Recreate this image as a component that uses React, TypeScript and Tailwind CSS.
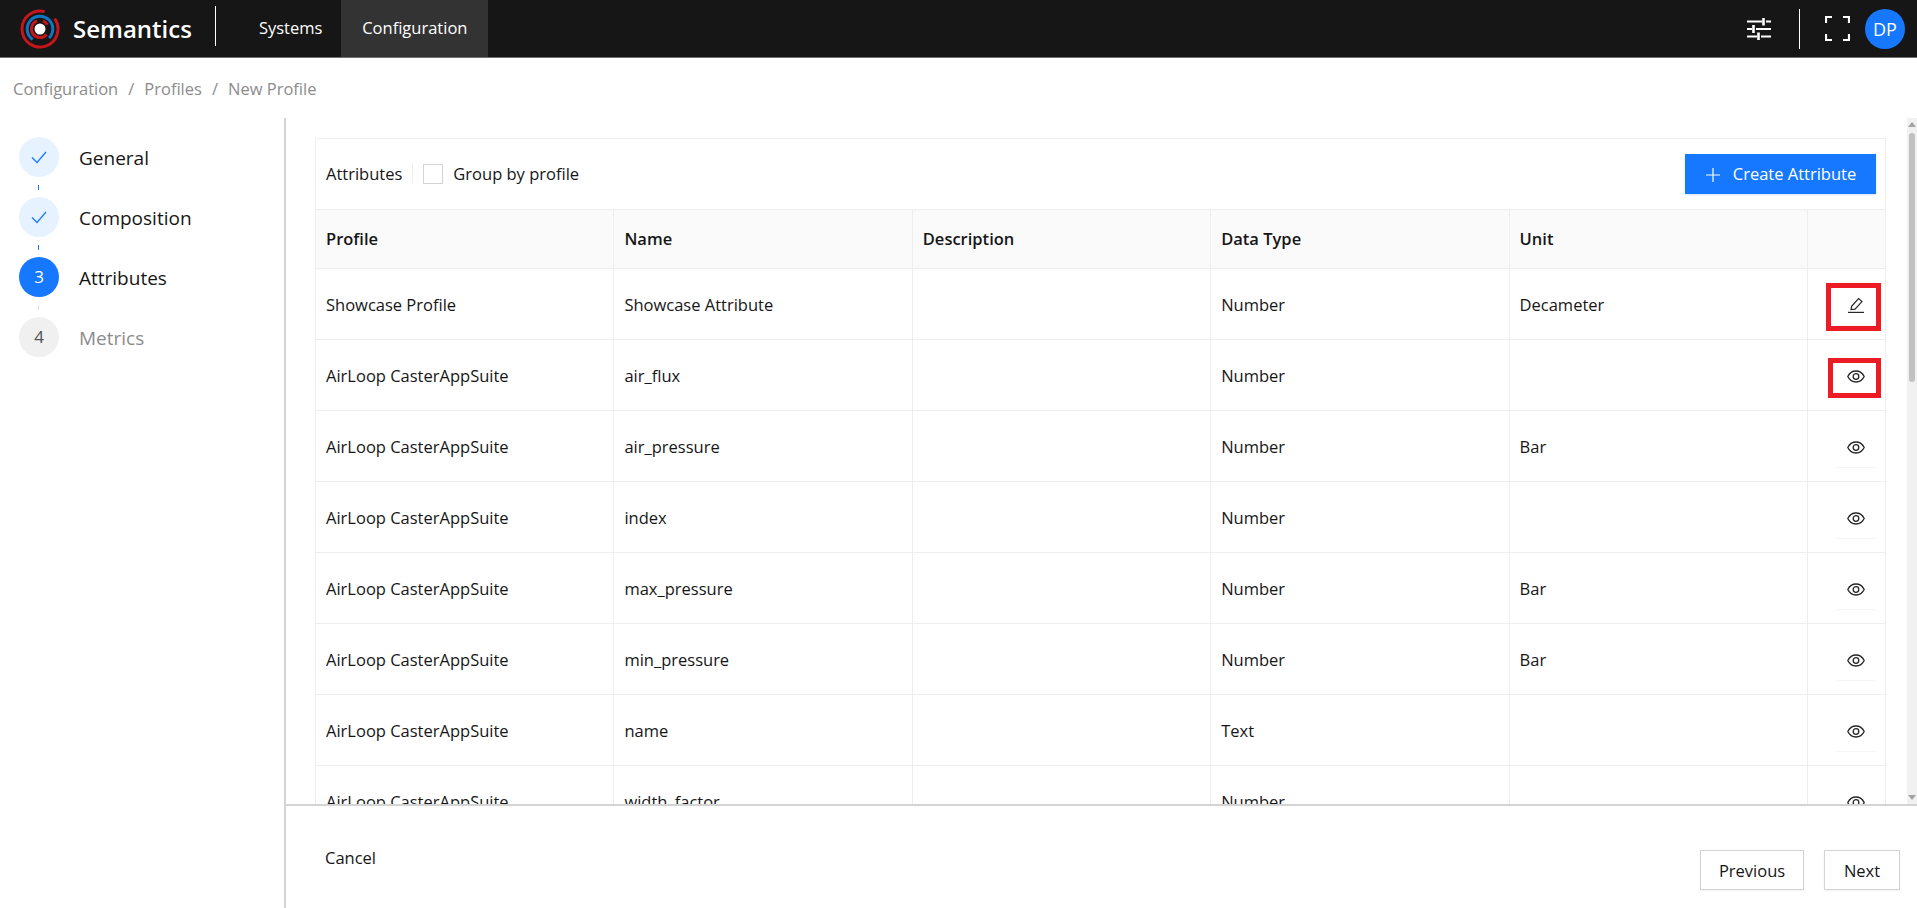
const FONT = "font-['Open_Sans','Noto_Sans',sans-serif]";

const COLUMNS = ["Profile", "Name", "Description", "Data Type", "Unit"];

type Row = { profile: string; name: string; type: string; unit: string; icon: "edit" | "view"; marked?: boolean };

const ROWS: Row[] = [
  { profile: "Showcase Profile", name: "Showcase Attribute", type: "Number", unit: "Decameter", icon: "edit", marked: true },
  { profile: "AirLoop CasterAppSuite", name: "air_flux", type: "Number", unit: "", icon: "view", marked: true },
  { profile: "AirLoop CasterAppSuite", name: "air_pressure", type: "Number", unit: "Bar", icon: "view" },
  { profile: "AirLoop CasterAppSuite", name: "index", type: "Number", unit: "", icon: "view" },
  { profile: "AirLoop CasterAppSuite", name: "max_pressure", type: "Number", unit: "Bar", icon: "view" },
  { profile: "AirLoop CasterAppSuite", name: "min_pressure", type: "Number", unit: "Bar", icon: "view" },
  { profile: "AirLoop CasterAppSuite", name: "name", type: "Text", unit: "", icon: "view" },
  { profile: "AirLoop CasterAppSuite", name: "width_factor", type: "Number", unit: "", icon: "view" },
];

// clockwise arc around the logo centre, angles in degrees from 12 o'clock
function arc(r: number, from: number, to: number) {
  const pt = (a: number) => {
    const rad = (a * Math.PI) / 180;
    return `${(20 + r * Math.sin(rad)).toFixed(2)} ${(20 - r * Math.cos(rad)).toFixed(2)}`;
  };
  return `M${pt(from)}A${r} ${r} 0 ${to - from > 180 ? 1 : 0} 1 ${pt(to)}`;
}

function Logo() {
  return (
    <svg width="40" height="40" viewBox="0 0 40 40" fill="none" strokeWidth="3">
      <path d={arc(18, 55, 375)} stroke="#c4161c" />
      <path d={arc(12.8, 215, 495)} stroke="#1275c0" />
      <path d={arc(8.6, 130, 340)} stroke="#c4161c" />
      <path d={arc(8.6, 20, 60)} stroke="#c4161c" />
      <circle cx="20" cy="20" r="5.5" fill="#fff" />
    </svg>
  );
}

function SlidersIcon() {
  return (
    <svg width="24" height="24" viewBox="0 0 24 24" fill="none" stroke="#fff" strokeWidth="2.2">
      <path d="M0 4.5h15M19 4.5h5M0 12h5M9 12h15M0 19.5h10M14 19.5h10" />
      <path d="M16.5 1v7.5M6.5 8v8M11.5 15.5v7.5" strokeWidth="2.6" />
    </svg>
  );
}

function FullscreenIcon() {
  return (
    <svg width="25" height="25" viewBox="0 0 25 25" fill="none" stroke="#fff" strokeWidth="2.2">
      <path d="M1 7V1h6M18 1h6v6M24 18v6h-6M7 24H1v-6" />
    </svg>
  );
}

function CheckIcon() {
  return (
    <svg width="16" height="16" viewBox="0 0 16 16" fill="none" stroke="#1677ff" strokeWidth="1.2">
      <path d="M1 8.5 6 13.5 15 3" />
    </svg>
  );
}

function PencilIcon() {
  return (
    <svg width="16" height="16" viewBox="0 0 16 16" fill="none" stroke="#262626" strokeWidth="1.2">
      <path d="M0 15.4h16" />
      <path d="M3 12.6 3.6 9.3 10.6 1.5 14 4.6 7 12.2Z" />
    </svg>
  );
}

function EyeIcon() {
  return (
    <svg width="18" height="13" viewBox="0 0 18 13" fill="none" stroke="#262626" strokeWidth="1.3">
      <path d="M.8 6.5C2.6 2.8 5.5 1 9 1s6.4 1.8 8.2 5.5C15.4 10.2 12.5 12 9 12S2.6 10.2.8 6.5Z" />
      <circle cx="9" cy="6.5" r="2.8" />
    </svg>
  );
}

function Step({ mark, label, state }: { mark: React.ReactNode; label: string; state: "done" | "active" | "todo" }) {
  const circle =
    state === "done"
      ? "bg-[#e6f2ff] text-[#1677ff]"
      : state === "active"
        ? "bg-[#1677ff] text-white"
        : "bg-[#f0f0f0] text-[#525252]";
  return (
    <div className="flex h-10 items-center gap-5">
      <div className={`flex h-10 w-10 items-center justify-center rounded-full text-[17px] ${circle}`}>{mark}</div>
      <span className={`pt-[2px] text-[19px] ${state === "todo" ? "text-[#8c8c8c]" : "text-[#161616]"}`}>{label}</span>
    </div>
  );
}

function Connector({ done }: { done: boolean }) {
  return (
    <div className="flex h-5 w-[39px] items-center justify-center">
      <div className={`h-[5px] w-px ${done ? "bg-[#1677ff]" : "bg-[#e0e0e0]"}`} />
    </div>
  );
}

export default function App() {
  return (
    <div className={`flex h-[908px] w-[1917px] flex-col overflow-hidden bg-white text-[#161616] ${FONT}`}>
      {/* top bar */}
      <header className="flex h-[58px] shrink-0 items-stretch border-b border-[#6f6f6f] bg-[#161616] text-white">
        <div className="ml-5 flex items-center">
          <Logo />
        </div>
        <div className="ml-[13px] flex items-center text-2xl font-semibold">Semantics</div>
        <div className="ml-[23px] mt-1.5 h-10 w-px bg-white" />
        <div className="ml-[43px] flex items-center text-[16.5px]">Systems</div>
        <div className="ml-[19px] flex w-[147px] items-center justify-center bg-[#333333] text-[16.5px]">Configuration</div>
        <div className="ml-auto flex items-center">
          <SlidersIcon />
          <div className="ml-7 mr-[25px] h-10 w-px bg-white" />
          <FullscreenIcon />
          <div className="ml-[15px] mr-3 flex h-10 w-10 items-center justify-center rounded-full bg-[#1677ff] text-lg">
            DP
          </div>
        </div>
      </header>

      {/* breadcrumb */}
      <div className="flex h-[60px] shrink-0 items-center gap-2.5 pl-[13px] pt-[2px] text-[16.5px] text-[#8c8c8c]">
        <span>Configuration</span>
        <span>/</span>
        <span>Profiles</span>
        <span>/</span>
        <span>New Profile</span>
      </div>

      <div className="flex min-h-0 flex-1">
        {/* wizard steps */}
        <aside className="w-[286px] shrink-0 border-r-2 border-[#d4d4d4] pl-[19px] pt-[19px]">
          <Step state="done" label="General" mark={<CheckIcon />} />
          <Connector done />
          <Step state="done" label="Composition" mark={<CheckIcon />} />
          <Connector done />
          <Step state="active" label="Attributes" mark="3" />
          <Connector done={false} />
          <Step state="todo" label="Metrics" mark="4" />
        </aside>

        <div className="flex min-w-0 flex-1 flex-col">
          <div className="flex min-h-0 flex-1">
            <main className="min-w-0 flex-1 overflow-hidden pl-[29px] pr-[21px] pt-5">
              <div className="border border-[#eeeeee] text-[16.5px]">
                <div className="flex h-[70px] items-center pl-[10px] pr-[9px]">
                  <span className="pt-px">Attributes</span>
                  <div className="ml-2.5 h-5 w-px bg-[#eeeeee]" />
                  <div className="ml-2.5 h-5 w-5 border border-[#d4d4d4]" />
                  <span className="ml-2.5 pt-px">Group by profile</span>
                  <button className="ml-auto flex h-10 w-[191px] items-center justify-center gap-3 bg-[#1677ff] pt-px text-white shadow-[0_1px_2px_rgba(22,119,255,0.2)]">
                    <svg width="16" height="16" viewBox="0 0 16 16" stroke="#fff" strokeWidth="1.2">
                      <path d="M8 1v14M1 8h14" />
                    </svg>
                    Create Attribute
                  </button>
                </div>
                <div className="grid grid-cols-[repeat(5,298.4px)_1fr]">
                  {COLUMNS.map((col) => (
                    <div key={col} className="flex h-[60px] items-center border-y border-r border-[#eeeeee] bg-[#fafafa] pl-[10px] pt-px font-semibold">
                      {col}
                    </div>
                  ))}
                  <div className="h-[60px] border-y border-[#eeeeee] bg-[#fafafa]" />
                  {ROWS.map((row) => (
                    <Cells key={row.name} row={row} />
                  ))}
                </div>
              </div>
            </main>
            {/* page scrollbar */}
            <div className="flex w-[10px] shrink-0 flex-col items-center bg-[#f1f1f1]">
              <div className="mt-1 h-0 w-0 border-x-[4px] border-b-[5px] border-x-transparent border-b-[#a3a3a3]" />
              <div className="mt-1.5 h-[249px] w-[6px] rounded-sm bg-[#c1c1c1]" />
              <div className="mb-1 mt-auto h-0 w-0 border-x-[4px] border-t-[5px] border-x-transparent border-t-[#a3a3a3]" />
            </div>
          </div>

          {/* wizard footer */}
          <footer className="flex h-[104px] shrink-0 items-center border-t-2 border-[#d4d4d4] pl-[39px] pr-[17px] text-[16.5px]">
            <span className="pt-[3px]">Cancel</span>
            <div className="ml-auto mt-[26px] flex gap-5">
              <button className="h-10 w-[104px] border border-[#d4d4d4] pt-[2px] shadow-[0_1px_2px_rgba(0,0,0,0.06)]">Previous</button>
              <button className="h-10 w-[76px] border border-[#d4d4d4] pt-[2px] shadow-[0_1px_2px_rgba(0,0,0,0.06)]">Next</button>
            </div>
          </footer>
        </div>
      </div>
    </div>
  );
}

function Cells({ row }: { row: Row }) {
  const cell = "flex h-[71px] items-center border-b border-r border-[#eeeeee] pl-[10px] pt-[2px]";
  return (
    <>
      <div className={cell}>{row.profile}</div>
      <div className={cell}>{row.name}</div>
      <div className={cell} />
      <div className={cell}>{row.type}</div>
      <div className={cell}>{row.unit}</div>
      <div className="relative flex h-[71px] items-center justify-end border-b border-[#eeeeee] pr-[9px] pt-[2px]">
        <div className="flex h-10 w-10 items-center justify-center shadow-[0_1px_1px_rgba(0,0,0,0.04)]">
          {row.icon === "edit" ? <PencilIcon /> : <EyeIcon />}
        </div>
        {row.marked && row.icon === "edit" && (
          <div className="absolute left-[18px] top-[14px] h-12 w-[55px] border-[5px] border-[#ed1c24]" />
        )}
        {row.marked && row.icon === "view" && (
          <div className="absolute left-5 top-[18px] h-10 w-[53px] border-[5px] border-[#ed1c24]" />
        )}
      </div>
    </>
  );
}
